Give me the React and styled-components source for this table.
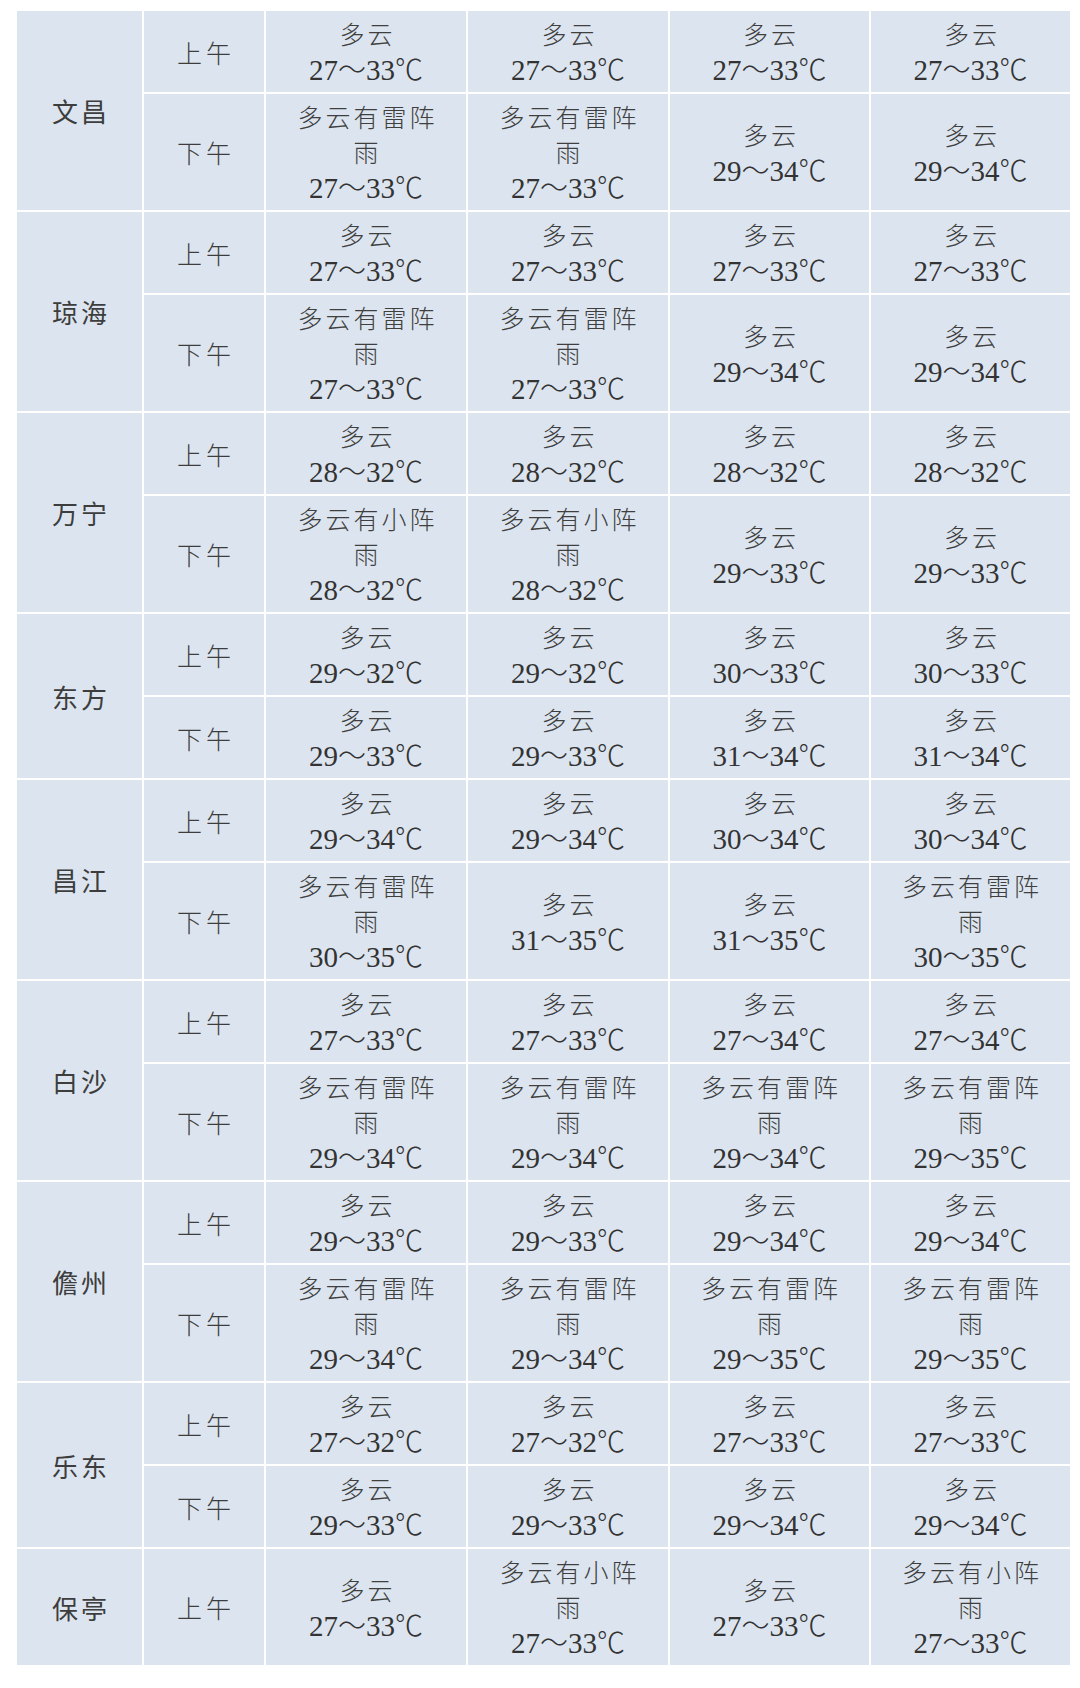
import styled, { createGlobalStyle } from "styled-components";

const GlobalStyle = createGlobalStyle`
  html, body {
    margin: 0;
    padding: 0;
    background: #ffffff;
  }
  body {
    font-family: "Noto Sans CJK SC", sans-serif;
  }
`;

const Page = styled.div`
  width: 1080px;
  padding: 9px 0 0 15px;
  box-sizing: border-box;
`;

const Table = styled.table`
  border-collapse: collapse;
  table-layout: fixed;
  width: 1055px;
`;

const Col = styled.col`
  width: ${(p) => p.$w}px;
`;

const Cell = styled.td`
  background: #dce5ef;
  border: 2px solid #ffffff;
  text-align: center;
  vertical-align: middle;
  padding: 5px 0;
  color: #3a3a3a;
`;

const CityCell = styled(Cell)`
  font-size: 26px;
  letter-spacing: 3px;
  padding-left: 3px;
  color: #3d3d3d;
`;

const HalfCell = styled(Cell)`
  font-size: 25px;
  font-weight: 300;
  letter-spacing: 4px;
  padding-left: 4px;
  color: #3d3d3d;
`;

const Stack = styled.div`
  display: flex;
  flex-direction: column;
  align-items: center;
  justify-content: center;
  min-height: 71px;
`;

const Sky = styled.div`
  font-family: "Noto Sans CJK SC", sans-serif;
  font-size: 25px;
  line-height: 35px;
  font-weight: 300;
  letter-spacing: 3px;
  padding-left: 3px;
  max-width: 150px;
  color: #3f3f3f;
`;

const Temp = styled.div`
  font-size: 28px;
  line-height: 34px;
  color: #333333;
  white-space: nowrap;
`;

const Num = styled.span`
  font-family: "Liberation Serif", "Times New Roman", "DejaVu Serif", serif;
  font-size: 29px;
`;

const Mark = styled.span`
  font-family: "Noto Sans CJK SC", sans-serif;
  font-weight: 300;
`;

const C = "多云";
const L = "多云有雷阵雨";
const S = "多云有小阵雨";

const data = [
  {
    city: "文昌",
    rows: [
      ["上午", [[C, 27, 33], [C, 27, 33], [C, 27, 33], [C, 27, 33]]],
      ["下午", [[L, 27, 33], [L, 27, 33], [C, 29, 34], [C, 29, 34]]],
    ],
  },
  {
    city: "琼海",
    rows: [
      ["上午", [[C, 27, 33], [C, 27, 33], [C, 27, 33], [C, 27, 33]]],
      ["下午", [[L, 27, 33], [L, 27, 33], [C, 29, 34], [C, 29, 34]]],
    ],
  },
  {
    city: "万宁",
    rows: [
      ["上午", [[C, 28, 32], [C, 28, 32], [C, 28, 32], [C, 28, 32]]],
      ["下午", [[S, 28, 32], [S, 28, 32], [C, 29, 33], [C, 29, 33]]],
    ],
  },
  {
    city: "东方",
    rows: [
      ["上午", [[C, 29, 32], [C, 29, 32], [C, 30, 33], [C, 30, 33]]],
      ["下午", [[C, 29, 33], [C, 29, 33], [C, 31, 34], [C, 31, 34]]],
    ],
  },
  {
    city: "昌江",
    rows: [
      ["上午", [[C, 29, 34], [C, 29, 34], [C, 30, 34], [C, 30, 34]]],
      ["下午", [[L, 30, 35], [C, 31, 35], [C, 31, 35], [L, 30, 35]]],
    ],
  },
  {
    city: "白沙",
    rows: [
      ["上午", [[C, 27, 33], [C, 27, 33], [C, 27, 34], [C, 27, 34]]],
      ["下午", [[L, 29, 34], [L, 29, 34], [L, 29, 34], [L, 29, 35]]],
    ],
  },
  {
    city: "儋州",
    rows: [
      ["上午", [[C, 29, 33], [C, 29, 33], [C, 29, 34], [C, 29, 34]]],
      ["下午", [[L, 29, 34], [L, 29, 34], [L, 29, 35], [L, 29, 35]]],
    ],
  },
  {
    city: "乐东",
    rows: [
      ["上午", [[C, 27, 32], [C, 27, 32], [C, 27, 33], [C, 27, 33]]],
      ["下午", [[C, 29, 33], [C, 29, 33], [C, 29, 34], [C, 29, 34]]],
    ],
  },
  {
    city: "保亭",
    rows: [["上午", [[C, 27, 33], [S, 27, 33], [C, 27, 33], [S, 27, 33]]]],
  },
];

const widths = [127, 122, 202, 202, 201, 201];

const Forecast = ({ sky, lo, hi }) => (
  <Cell>
    <Stack>
      <Sky>{sky}</Sky>
      <Temp>
        <Num>{lo}</Num>
        <Mark>～</Mark>
        <Num>{hi}</Num>
        <Mark>℃</Mark>
      </Temp>
    </Stack>
  </Cell>
);

export default function App() {
  return (
    <Page>
      <GlobalStyle />
      <Table>
        <colgroup>
          {widths.map((w, i) => (
            <Col key={i} $w={w} />
          ))}
        </colgroup>
        <tbody>
          {data.map((block) =>
            block.rows.map(([half, cells], i) => (
              <tr key={block.city + half}>
                {i === 0 && (
                  <CityCell rowSpan={block.rows.length}>{block.city}</CityCell>
                )}
                <HalfCell>{half}</HalfCell>
                {cells.map(([sky, lo, hi], j) => (
                  <Forecast key={j} sky={sky} lo={lo} hi={hi} />
                ))}
              </tr>
            ))
          )}
        </tbody>
      </Table>
    </Page>
  );
}
